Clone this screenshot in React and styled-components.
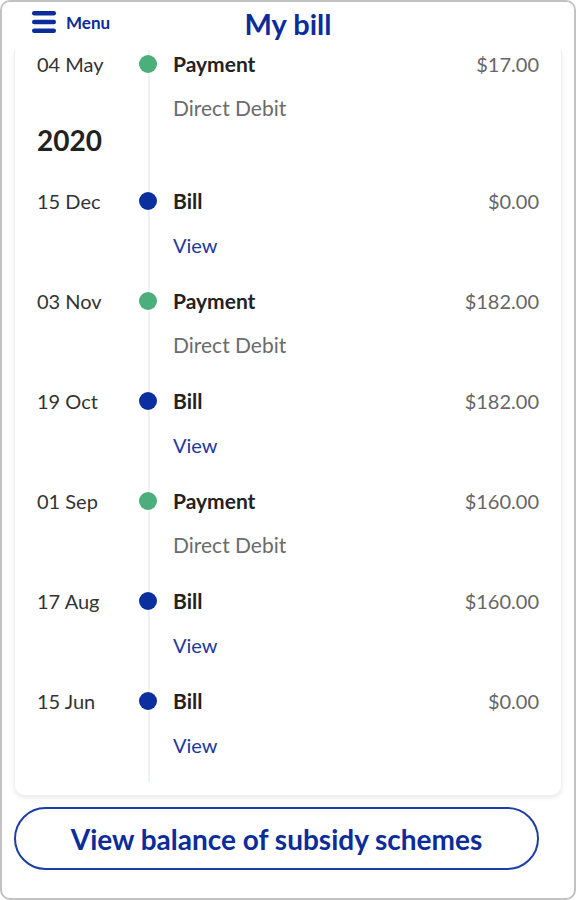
import React from "react";
import styled, { createGlobalStyle } from "styled-components";

const GlobalStyle = createGlobalStyle`
  html, body { margin: 0; padding: 0; background: #fff; }
  body { font-family: Lato, "Noto Sans", Arial, sans-serif; }
  * { box-sizing: border-box; }
`;

const Frame = styled.div`
  width: 576px;
  height: 900px;
  border: 2px solid #c2c2c2;
  border-radius: 10px;
  overflow: hidden;
  background: #fff;
  display: flex;
  flex-direction: column;
`;

const Header = styled.header`
  height: 48px;
  flex: none;
  display: grid;
  grid-template-columns: 1fr auto 1fr;
  align-items: center;
  padding: 0 29px;
  background: #fff;
`;

const MenuButton = styled.button`
  justify-self: start;
  display: flex;
  align-items: center;
  gap: 9px;
  border: 0;
  background: none;
  padding: 0;
  margin-top: -8px;
  color: #0b2c9a;
  font-family: inherit;
  font-weight: 700;
  font-size: 17px;
  cursor: pointer;
`;

const Title = styled.h1`
  margin: 0;
  margin-top: -5px;
  color: #0b2c9a;
  font-size: 29px;
  font-weight: 700;
`;

const Card = styled.section`
  margin: 0 12px;
  padding-bottom: 13px;
  background: #fff
    linear-gradient(#edf1f6, #edf1f6) no-repeat 133px 0 / 2px calc(100% - 13px);
  border-left: 1px solid #f0f0f0;
  border-right: 1px solid #f0f0f0;
  border-radius: 0 0 10px 10px;
  box-shadow: 0 3px 4px rgba(0, 0, 0, 0.08);
`;

const Row = styled.div`
  display: grid;
  grid-template-columns: 100px 22px 1fr;
  grid-template-rows: 24px 24px;
  row-gap: 20px;
  align-items: center;
  padding: ${(p) => (p.$first ? "2px" : "7px")} 22px
    ${(p) => (p.$last ? "5px" : "25px")} 22px;
  font-size: 20px;
  line-height: 24px;
`;

const DateText = styled.span`
  color: #333;
`;

const Dot = styled.span`
  justify-self: center;
  width: 18px;
  height: 18px;
  border-radius: 50%;
  background: ${(p) => (p.$kind === "Payment" ? "#4caf7b" : "#0b2f9f")};
`;

const Main = styled.div`
  display: flex;
  justify-content: space-between;
  align-items: center;
  padding-left: 14px;
`;

const Kind = styled.span`
  color: #222;
  font-weight: 700;
  font-size: 21px;
`;

const Amount = styled.span`
  color: #666;
`;

const Sub = styled.span`
  grid-column: 3;
  padding-left: 14px;
  font-size: ${(p) => (p.$link ? "20px" : "21px")};
  color: ${(p) => (p.$link ? "#1b3a9e" : "#6b6b6b")};
`;

const Year = styled.h2`
  margin: 0;
  padding: 0 22px 27px;
  font-size: 28px;
  line-height: 30px;
  color: #222;
  font-weight: 700;
`;

const SchemeButton = styled.button`
  margin: 12px 35px 0 12px;
  height: 63px;
  border: 2px solid #1d3ea3;
  border-radius: 32px;
  background: #fff;
  color: #0b2c9a;
  font-family: inherit;
  font-size: 28px;
  font-weight: 700;
  cursor: pointer;
`;

const Hamburger = () => (
  <svg width="26" height="24" viewBox="0 0 26 24" aria-hidden="true">
    <rect x="1" y="1" width="24" height="4.5" rx="2.25" fill="#0b2c9a" />
    <rect x="1" y="9.75" width="24" height="4.5" rx="2.25" fill="#0b2c9a" />
    <rect x="1" y="18.5" width="24" height="4.5" rx="2.25" fill="#0b2c9a" />
  </svg>
);

const before = [{ date: "04 May", kind: "Payment", amount: "$17.00" }];
const y2020 = [
  { date: "15 Dec", kind: "Bill", amount: "$0.00" },
  { date: "03 Nov", kind: "Payment", amount: "$182.00" },
  { date: "19 Oct", kind: "Bill", amount: "$182.00" },
  { date: "01 Sep", kind: "Payment", amount: "$160.00" },
  { date: "17 Aug", kind: "Bill", amount: "$160.00" },
  { date: "15 Jun", kind: "Bill", amount: "$0.00" },
];

const Entry = ({ item, first, last }) => (
  <Row $first={first} $last={last}>
    <DateText>{item.date}</DateText>
    <Dot $kind={item.kind} />
    <Main>
      <Kind>{item.kind}</Kind>
      <Amount>{item.amount}</Amount>
    </Main>
    {item.kind === "Payment" ? (
      <Sub>Direct Debit</Sub>
    ) : (
      <Sub $link>View</Sub>
    )}
  </Row>
);

export default function App() {
  return (
    <>
      <GlobalStyle />
      <Frame>
        <Header>
          <MenuButton>
            <Hamburger />
            Menu
          </MenuButton>
          <Title>My bill</Title>
        </Header>
        <Card>
          {before.map((it) => (
            <Entry key={it.date} item={it} first last />
          ))}
          <Year>2020</Year>
          {y2020.map((it) => (
            <Entry key={it.date} item={it} />
          ))}
        </Card>
        <SchemeButton>View balance of subsidy schemes</SchemeButton>
      </Frame>
    </>
  );
}
